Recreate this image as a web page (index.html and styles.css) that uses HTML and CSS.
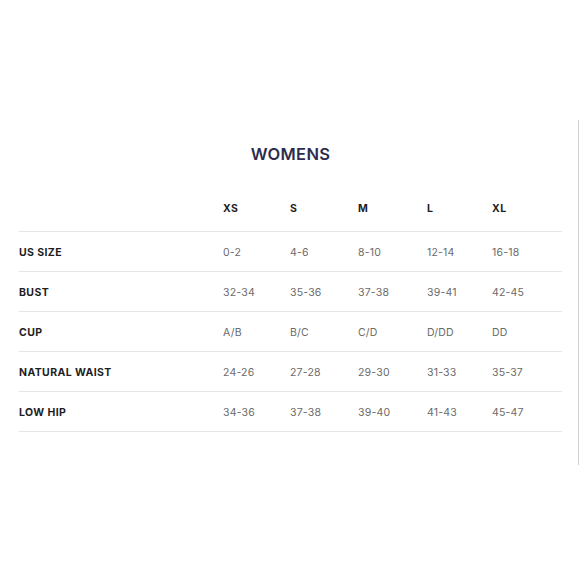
FILE: index.html
```html
<!DOCTYPE html>
<html>
<head>
<meta charset="utf-8">
<link rel="stylesheet" href="styles.css">
</head>
<body>
<div class="frame">
  <h1 class="title">WOMENS</h1>
  <div class="chart">
    <div class="row head">
      <div class="label"></div>
      <div class="cell">XS</div><div class="cell">S</div><div class="cell">M</div><div class="cell">L</div><div class="cell">XL</div>
    </div>
    <div class="row">
      <div class="label">US SIZE</div>
      <div class="cell">0-2</div><div class="cell">4-6</div><div class="cell">8-10</div><div class="cell">12-14</div><div class="cell">16-18</div>
    </div>
    <div class="row">
      <div class="label">BUST</div>
      <div class="cell">32-34</div><div class="cell">35-36</div><div class="cell">37-38</div><div class="cell">39-41</div><div class="cell">42-45</div>
    </div>
    <div class="row">
      <div class="label">CUP</div>
      <div class="cell">A/B</div><div class="cell">B/C</div><div class="cell">C/D</div><div class="cell">D/DD</div><div class="cell">DD</div>
    </div>
    <div class="row">
      <div class="label">NATURAL WAIST</div>
      <div class="cell">24-26</div><div class="cell">27-28</div><div class="cell">29-30</div><div class="cell">31-33</div><div class="cell">35-37</div>
    </div>
    <div class="row">
      <div class="label">LOW HIP</div>
      <div class="cell">34-36</div><div class="cell">37-38</div><div class="cell">39-40</div><div class="cell">41-43</div><div class="cell">45-47</div>
    </div>
  </div>
</div>
</body>
</html>
```
FILE: styles.css
```css
html, body {
  margin: 0;
  padding: 0;
  background: #ffffff;
}
body {
  width: 580px;
  height: 580px;
  font-family: Inter, "Liberation Sans", sans-serif;
  padding-top: 120px;
  box-sizing: border-box;
}
.frame {
  width: 579px;
  height: 345px;
  border-right: 1px solid #d2d2d2;
  padding-left: 19px;
  box-sizing: border-box;
}
.title {
  margin: 0;
  padding-top: 24px;
  width: 543px;
  text-align: center;
  font-size: 16.5px;
  font-weight: 600;
  color: #2b2d4e;
  line-height: 20px;
  letter-spacing: 0.3px;
}
.chart {
  width: 543px;
  margin-top: 28px;
}
.row {
  display: grid;
  grid-template-columns: 204px 67px 68px 69px 65px 70px;
  height: 40px;
  align-items: center;
  padding-top: 2px;
  border-bottom: 1.5px solid #e6e6e6;
  box-sizing: border-box;
}
.head {
  align-items: start;
  padding-top: 10px;
}
.label, .head .cell {
  font-size: 10.5px;
  font-weight: 700;
  color: #1e1e1e;
  letter-spacing: 0.4px;
}
.cell {
  font-size: 10.5px;
  color: #6a6a6a;
  letter-spacing: 0.2px;
}
```
